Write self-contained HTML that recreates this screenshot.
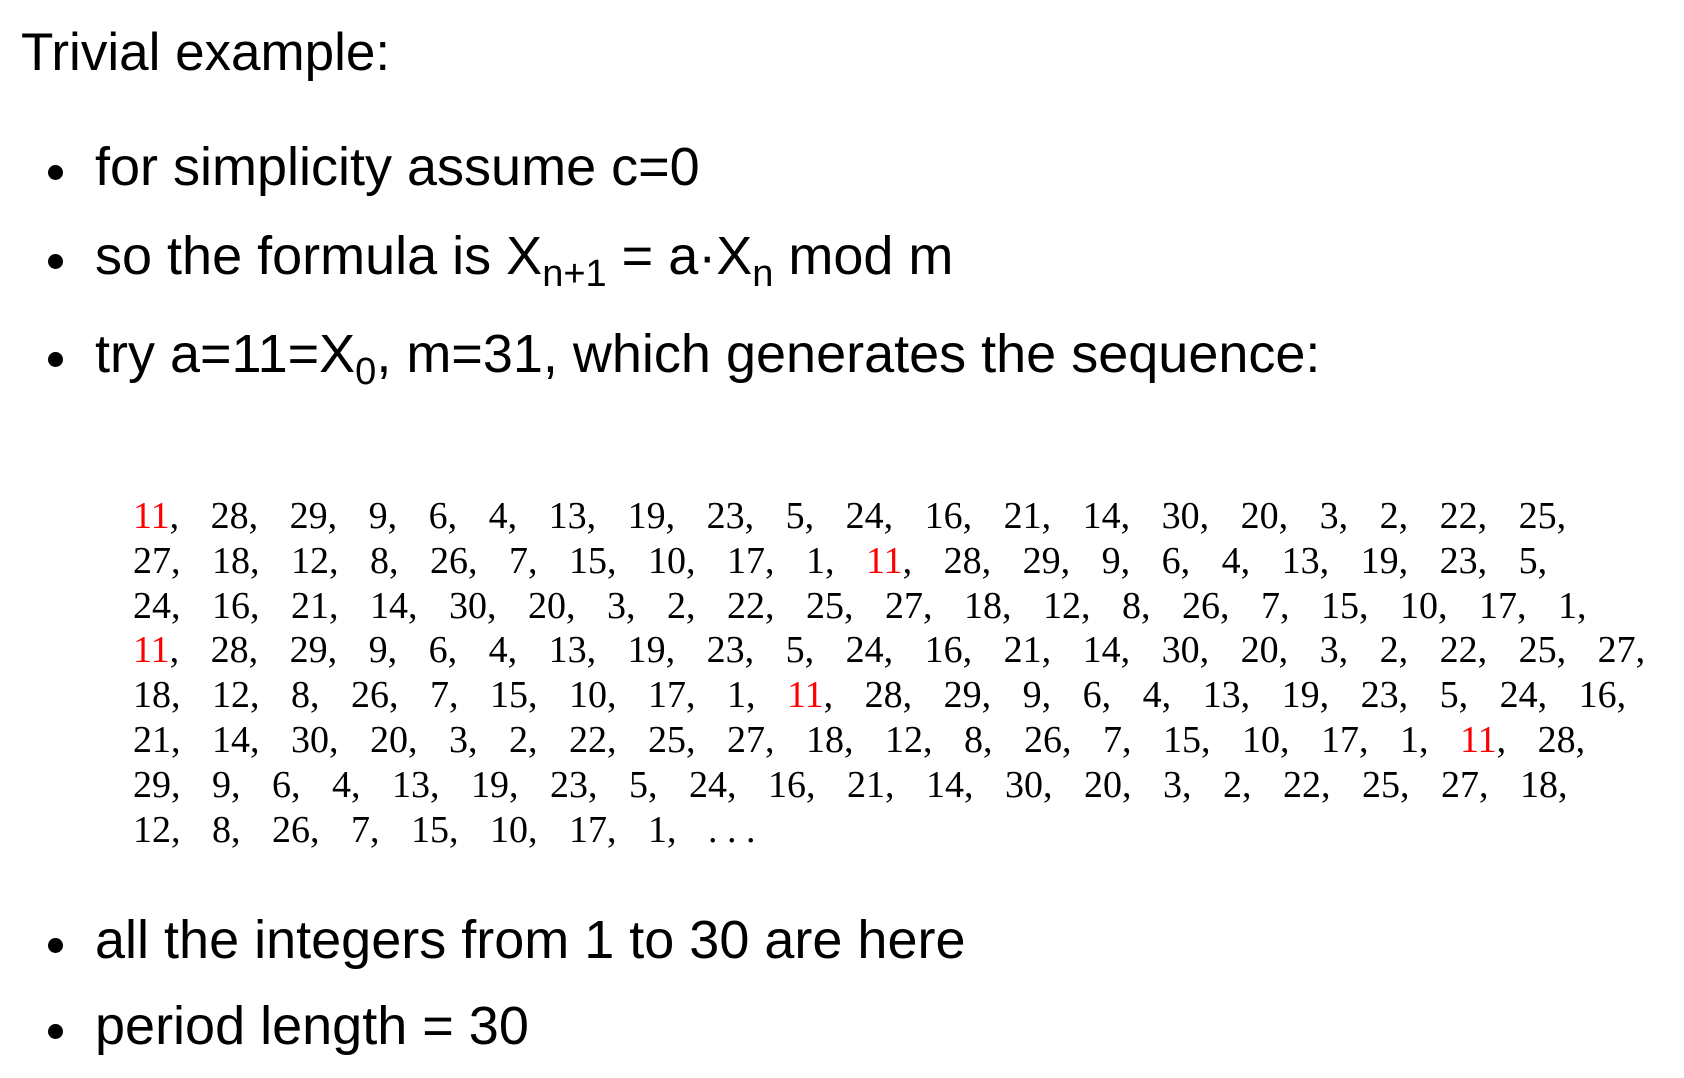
<!DOCTYPE html>
<html><head><meta charset="utf-8"><style>
body{margin:0;width:1684px;height:1078px;background:#fff;position:relative;overflow:hidden;font-family:"Liberation Sans",sans-serif;color:#000}
.t{position:absolute;left:21px;top:23px;font-size:53px;line-height:60px}
.b{position:absolute;left:95px;font-size:54px;line-height:60px;white-space:nowrap}
.b:before{content:"";position:absolute;left:-47px;top:28px;width:15px;height:15px;border-radius:50%;background:#000}
sub{font-size:38px;vertical-align:-12px;line-height:0}
.seq{position:absolute;left:133px;top:494px;font-family:"Liberation Serif",serif;font-size:38px;line-height:44.8px;white-space:pre;word-spacing:22px}
.r{color:#f00}
</style></head><body>
<div class="t">Trivial example:</div>
<div class="b" style="top:137px">for simplicity assume c=0</div>
<div class="b" style="top:226px">so the formula is X<sub>n+1</sub> = a·X<sub>n</sub> mod m</div>
<div class="b" style="top:324px">try a=11=X<sub>0</sub>, m=31, which generates the sequence:</div>
<div class="seq"><span class="r">11</span>, 28, 29, 9, 6, 4, 13, 19, 23, 5, 24, 16, 21, 14, 30, 20, 3, 2, 22, 25,
27, 18, 12, 8, 26, 7, 15, 10, 17, 1, <span class="r">11</span>, 28, 29, 9, 6, 4, 13, 19, 23, 5,
24, 16, 21, 14, 30, 20, 3, 2, 22, 25, 27, 18, 12, 8, 26, 7, 15, 10, 17, 1,
<span class="r">11</span>, 28, 29, 9, 6, 4, 13, 19, 23, 5, 24, 16, 21, 14, 30, 20, 3, 2, 22, 25, 27,
18, 12, 8, 26, 7, 15, 10, 17, 1, <span class="r">11</span>, 28, 29, 9, 6, 4, 13, 19, 23, 5, 24, 16,
21, 14, 30, 20, 3, 2, 22, 25, 27, 18, 12, 8, 26, 7, 15, 10, 17, 1, <span class="r">11</span>, 28,
29, 9, 6, 4, 13, 19, 23, 5, 24, 16, 21, 14, 30, 20, 3, 2, 22, 25, 27, 18,
12, 8, 26, 7, 15, 10, 17, 1, <span style="word-spacing:0">. . .</span></div>
<div class="b" style="top:910px">all the integers from 1 to 30 are here</div>
<div class="b" style="top:996px">period length = 30</div>
</body></html>
